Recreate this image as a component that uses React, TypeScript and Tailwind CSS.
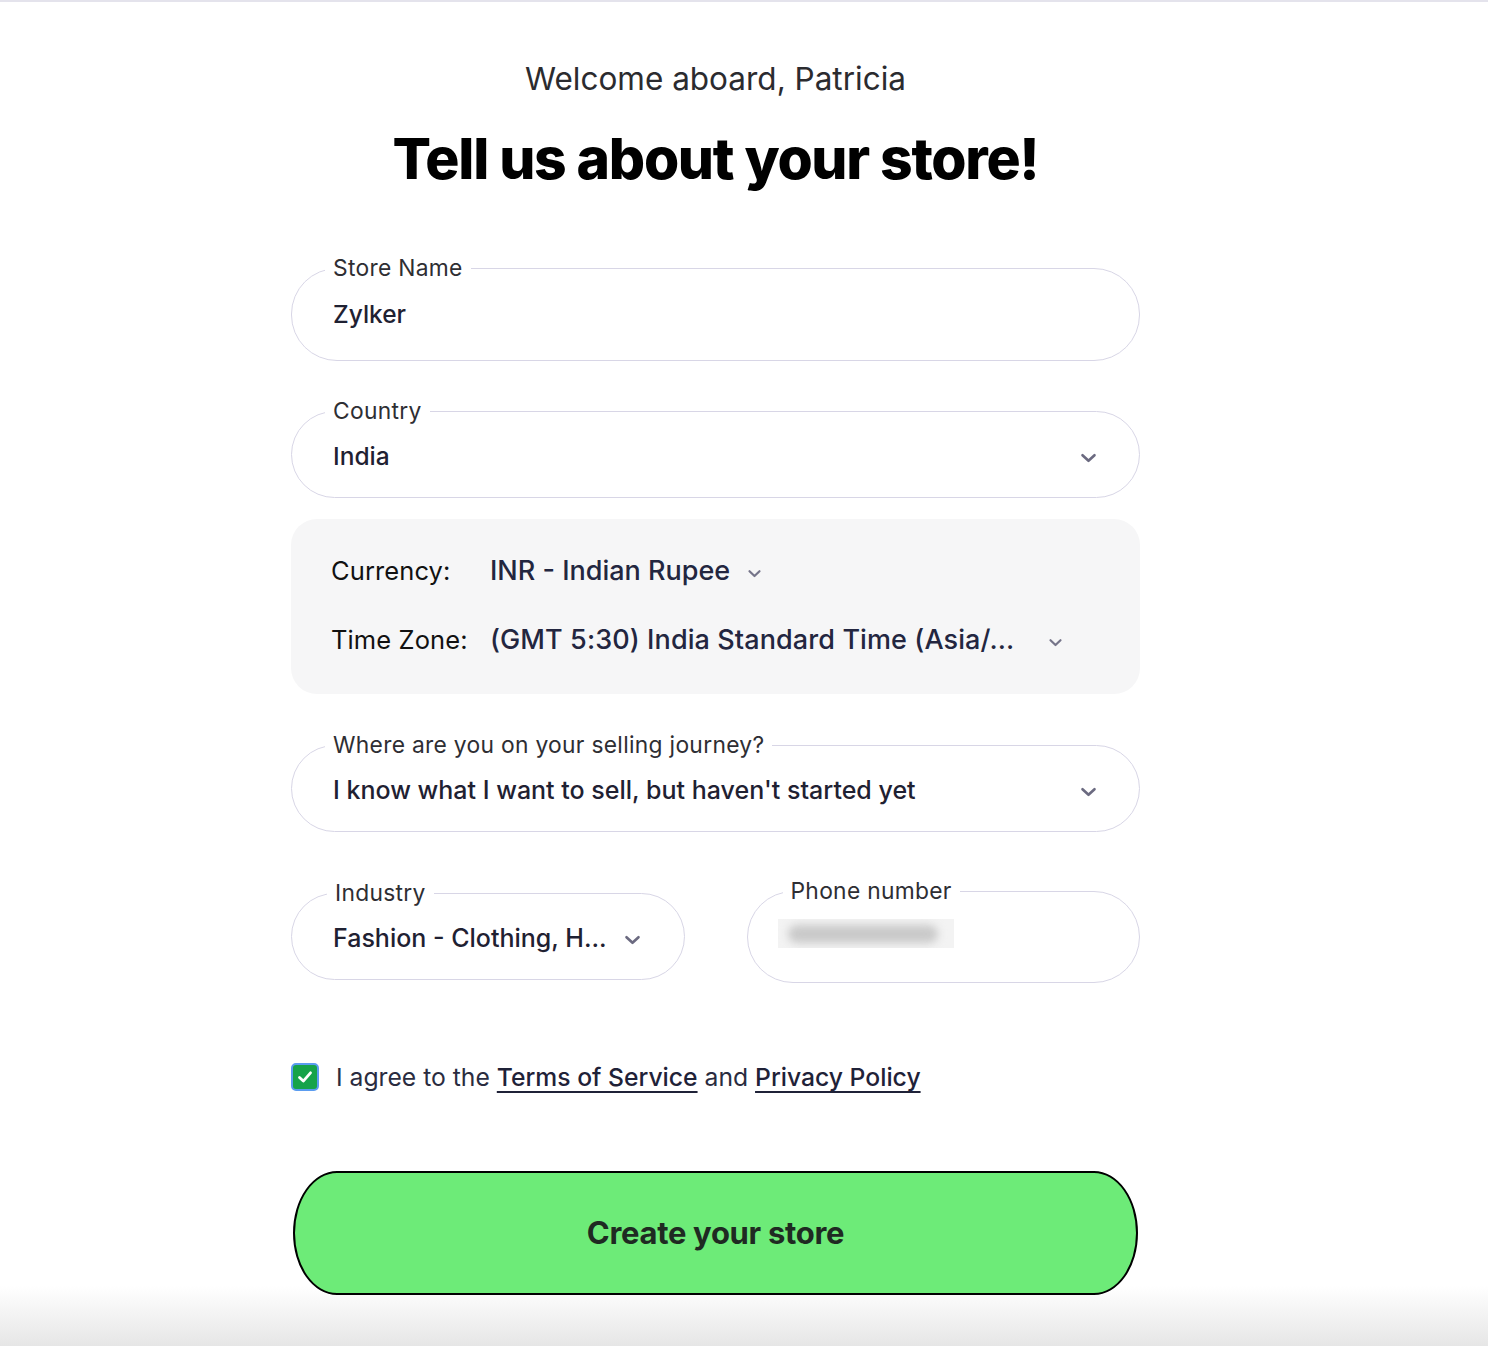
import React from "react";

const font = { fontFamily: "Inter, 'Noto Sans', sans-serif" };

function Chevron({ className = "" }: { className?: string }) {
  return (
    <svg className={className} width="17" height="10" viewBox="0 0 17 10" fill="none">
      <path d="M2.5 2.2l6 5.6 6-5.6" stroke="#6b6a80" strokeWidth="2.6" strokeLinecap="round" strokeLinejoin="round" />
    </svg>
  );
}

function SmallChevron({ className = "" }: { className?: string }) {
  return (
    <svg className={className} width="15" height="9" viewBox="0 0 15 9" fill="none">
      <path d="M2.5 2.2l5 4.8 5-4.8" stroke="#76758a" strokeWidth="2.2" strokeLinecap="round" strokeLinejoin="round" />
    </svg>
  );
}

function Field({
  label,
  children,
  className = "",
}: {
  label: string;
  children: React.ReactNode;
  className?: string;
}) {
  return (
    <fieldset className={`m-0 min-w-0 border border-[#d8d6e6] rounded-[46px] px-[41px] pb-[26px] pt-0 ${className}`}>
      <legend className="-ml-[8px] px-[8px] text-[22.8px] leading-[26px] text-[#2e2e33] tracking-[0.3px] whitespace-nowrap">{label}</legend>
      {children}
    </fieldset>
  );
}

export default function App() {
  return (
    <div style={font} className="relative min-h-[1346px] w-full bg-white border-t-2 border-[#e4e3ec] overflow-hidden">
      <div className="absolute bottom-0 left-0 right-0 h-[60px] bg-gradient-to-b from-white to-[#e6e6e6]" />
      <div className="relative ml-[291px] w-[849px] flex flex-col">
        <div className="pt-[57px] text-center text-[31.5px] leading-[40px] text-[#2b2b2f]">
          Welcome aboard, Patricia
        </div>
        <h1 className="mt-[28px] text-center text-[57px] leading-[64px] font-extrabold text-black tracking-[-1.3px]">
          Tell us about your store!
        </h1>

        <Field label="Store Name" className="mt-[64px] h-[106px]">
          <div className="mt-[17px] text-[24.5px] leading-[32px] font-medium text-[#1f2132]">Zylker</div>
        </Field>

        <Field label="Country" className="mt-[37px] h-[100px]">
          <div className="mt-[16px] flex items-center justify-between">
            <span className="text-[24.5px] leading-[32px] font-medium text-[#1f2132]">India</span>
            <Chevron className="mr-[1px] mt-[4px]" />
          </div>
        </Field>

        <div className="mt-[21px] h-[175px] rounded-[26px] bg-[#f6f6f7] px-[40px] pt-[36px]">
          <div className="grid grid-cols-[159px_1fr] gap-y-[37px] items-center">
            <span className="text-[25.5px] leading-[32px] text-[#111] tracking-[0.1px]">Currency:</span>
            <span className="flex items-center gap-[17px] text-[27px] leading-[32px] font-medium text-[#232640]">
              INR - Indian Rupee <SmallChevron className="mt-[4px]" />
            </span>
            <span className="text-[25.5px] leading-[32px] text-[#111] tracking-[0.1px]">Time Zone:</span>
            <span className="flex items-center gap-[34px] text-[27px] leading-[32px] font-medium text-[#232640] tracking-[0.1px]">
              (GMT 5:30) India Standard Time (Asia/... <SmallChevron className="mt-[4px]" />
            </span>
          </div>
        </div>

        <Field label="Where are you on your selling journey?" className="mt-[38px] h-[100px]">
          <div className="mt-[16px] flex items-center justify-between">
            <span className="text-[25px] leading-[32px] font-medium text-[#1f2132] whitespace-nowrap">
              I know what I want to sell, but haven't started yet
            </span>
            <Chevron className="mr-[1px] mt-[4px]" />
          </div>
        </Field>

        <div className="mt-[48px] grid grid-cols-2 gap-[62px]">
          <Field label="Industry" className="h-[100px] !px-[43px] rounded-[48px]">
            <div className="mt-[16px] -ml-[2px] flex items-center gap-[17px] whitespace-nowrap">
              <span className="shrink-0 text-[25px] leading-[32px] font-medium text-[#1f2132]">Fashion - Clothing, H...</span>
              <Chevron className="shrink-0 mt-[4px]" />
            </div>
          </Field>
          <Field label="Phone number" className="-mt-[2px] h-[105px] !px-[43px] rounded-[48px]">
            <div className="mt-[15px] -ml-[13px] h-[29px] w-[176px] bg-[#f3f3f3] flex items-center px-[10px] overflow-hidden">
              <div className="h-[18px] w-[150px] rounded-full bg-[#c9c9c9] blur-[4px]" />
            </div>
          </Field>
        </div>

        <div className="mt-[78px] flex items-center gap-[17px]">
          <span className="flex h-[28px] w-[28px] items-center justify-center rounded-[5px] border-2 border-[#5b9cf0] bg-[#16a34a]">
            <svg width="16" height="14" viewBox="0 0 16 14" fill="none">
              <path d="M2.5 7.5l3.8 3.6L13.5 2.8" stroke="white" strokeWidth="2.8" strokeLinecap="round" strokeLinejoin="round" />
            </svg>
          </span>
          <span className="text-[24.7px] leading-[32px] text-[#2a2c40] whitespace-nowrap">
            I agree to the{" "}
            <a className="underline underline-offset-[5px] decoration-[2px] font-medium text-[#1f2238]">Terms of Service</a>{" "}
            and{" "}
            <a className="underline underline-offset-[5px] decoration-[2px] font-medium text-[#1f2238]">Privacy Policy</a>
          </span>
        </div>

        <button className="mt-[78px] mx-[2px] h-[124px] rounded-[44px/62px] border-2 border-black bg-[#6deb78] text-[31px] font-bold text-[#1f2a22] tracking-[-0.3px]">
          Create your store
        </button>
      </div>
    </div>
  );
}
